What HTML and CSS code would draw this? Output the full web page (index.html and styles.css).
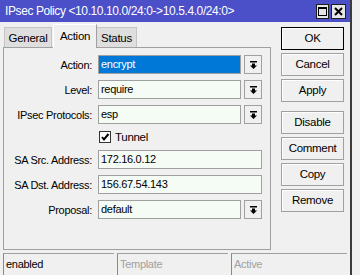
FILE: index.html
```html
<!DOCTYPE html>
<html>
<head>
<meta charset="utf-8">
<link rel="stylesheet" href="styles.css">
</head>
<body>
<div class="window">
  <div class="titlebar">
    <span class="title">IPsec Policy &lt;10.10.10.0/24:0-&gt;10.5.4.0/24:0&gt;</span>
    <div class="tb-buttons">
      <span class="tb-btn max"><svg width="9" height="9" viewBox="0 0 9 9"><rect x="0.5" y="0.5" width="8" height="8" fill="none" stroke="#000"/><rect x="0" y="0" width="9" height="2" fill="#000"/></svg></span>
      <span class="tb-btn close"><svg width="9" height="9" viewBox="0 0 9 9"><path d="M1 1 L8 8 M8 1 L1 8" stroke="#000" stroke-width="2"/></svg></span>
    </div>
  </div>
  <div class="main">
    <div class="left">
      <div class="tabs">
        <div class="tab t-general">General</div>
        <div class="tab active t-action">Action</div>
        <div class="tab t-status">Status</div>
      </div>
      <div class="panel">
        <div class="row">
          <span class="lbl">Action:</span>
          <div class="combo"><div class="field selected">encrypt</div><div class="drop"><svg width="7" height="8" viewBox="0 0 7 8"><rect x="0" y="0" width="7" height="1.5"/><rect x="2" y="2.5" width="3" height="2.5"/><polygon points="0,4.5 7,4.5 3.5,8"/></svg></div></div>
        </div>
        <div class="row">
          <span class="lbl">Level:</span>
          <div class="combo"><div class="field">require</div><div class="drop"><svg width="7" height="8" viewBox="0 0 7 8"><rect x="0" y="0" width="7" height="1.5"/><rect x="2" y="2.5" width="3" height="2.5"/><polygon points="0,4.5 7,4.5 3.5,8"/></svg></div></div>
        </div>
        <div class="row">
          <span class="lbl">IPsec Protocols:</span>
          <div class="combo"><div class="field">esp</div><div class="drop"><svg width="7" height="8" viewBox="0 0 7 8"><rect x="0" y="0" width="7" height="1.5"/><rect x="2" y="2.5" width="3" height="2.5"/><polygon points="0,4.5 7,4.5 3.5,8"/></svg></div></div>
        </div>
        <div class="row check-row">
          <span class="check"><svg width="10" height="10" viewBox="0 0 10 10"><path d="M2 5 L4 7.5 L8.5 2" fill="none" stroke="#000" stroke-width="2"/></svg></span>
          <span class="check-lbl">Tunnel</span>
        </div>
        <div class="row">
          <span class="lbl">SA Src. Address:</span>
          <div class="field wide">172.16.0.12</div>
        </div>
        <div class="row">
          <span class="lbl">SA Dst. Address:</span>
          <div class="field wide">156.67.54.143</div>
        </div>
        <div class="row">
          <span class="lbl">Proposal:</span>
          <div class="combo"><div class="field">default</div><div class="drop"><svg width="7" height="8" viewBox="0 0 7 8"><rect x="0" y="0" width="7" height="1.5"/><rect x="2" y="2.5" width="3" height="2.5"/><polygon points="0,4.5 7,4.5 3.5,8"/></svg></div></div>
        </div>
      </div>
    </div>
    <div class="buttons">
      <div class="btn default">OK</div>
      <div class="btn">Cancel</div>
      <div class="btn">Apply</div>
      <div class="btn sep">Disable</div>
      <div class="btn">Comment</div>
      <div class="btn">Copy</div>
      <div class="btn">Remove</div>
    </div>
  </div>
  <div class="statusbar">
    <div class="sb s1">enabled</div>
    <div class="sb s2 dim">Template</div>
    <div class="sb s3 dim">Active</div>
  </div>
</div>
</body>
</html>
```

FILE: styles.css
```css
html, body {
  margin: 0;
  padding: 0;
}
body {
  background: #f0f0f0;
  font-family: "Liberation Sans", Arial, sans-serif;
  font-size: 11px;
  letter-spacing: -0.3px;
  color: #000;
}
.window {
  width: 350px;
  height: 275px;
  border-right: 2px solid #3c3c3c;
  background: #f0f0f0;
  display: flex;
  flex-direction: column;
  overflow: hidden;
}
.titlebar {
  height: 22px;
  flex: none;
  background: #4b4fc8;
  display: flex;
  align-items: center;
  padding: 0 4px 0 5px;
  color: #fff;
}
.title {
  flex: 1;
  font-size: 12px;
  letter-spacing: -0.4px;
  white-space: nowrap;
}
.tb-buttons {
  display: flex;
  gap: 2px;
}
.tb-btn {
  box-sizing: border-box;
  height: 15px;
  border: 1px solid #1e1e1e;
  background: #e6e6e6;
  display: flex;
  align-items: center;
  justify-content: center;
}
.tb-btn.max { width: 13px; }
.tb-btn.close { width: 15px; }

.main {
  height: 231px;
  flex: none;
  box-sizing: border-box;
  padding-top: 2px;
  display: flex;
}
.left {
  margin-left: 3px;
  width: 268px;
  display: flex;
  flex-direction: column;
}
.tabs {
  height: 23px;
  display: flex;
  align-items: flex-end;
  padding-left: 1px;
  position: relative;
  z-index: 1;
}
.tab {
  box-sizing: border-box;
  height: 20px;
  border: 1px solid #c4c4c4;
  border-bottom: none;
  background: #dedede;
  text-align: center;
  padding-top: 4px;
  font-size: 11.5px;
}
.t-general { width: 48px; margin-right: 1px; }
.t-action { width: 44px; }
.t-status { width: 40px; border-left: none; }
.tab.active {
  height: 24px;
  margin-bottom: -1px;
  background: #f0f0f0;
  border-color: #ffffff #a0a0a0 #a0a0a0 #ffffff;
  padding-top: 5px;
}
.panel {
  box-sizing: border-box;
  height: 203px;
  border: 1px solid #a0a0a0;
  padding-top: 7px;
  display: flex;
  flex-direction: column;
  gap: 6px;
}
.row {
  height: 19px;
  display: flex;
  align-items: center;
}
.lbl {
  width: 88px;
  margin-right: 6px;
  text-align: right;
  white-space: nowrap;
}
.combo {
  display: flex;
  gap: 3px;
}
.field {
  box-sizing: border-box;
  width: 143px;
  height: 19px;
  border: 1px solid #a0a0a0;
  background: #f5fbf5;
  padding-left: 2px;
  line-height: 17px;
  white-space: nowrap;
}
.field.wide { width: 164px; }
.field.selected {
  background: #0078d7;
  color: #fff;
}
.drop {
  box-sizing: border-box;
  width: 18px;
  height: 19px;
  border: 1px solid #a0a0a0;
  background: #f0f0f0;
  display: flex;
  align-items: center;
  justify-content: center;
}
.check-row {
  height: 14px;
  padding-left: 95px;
}
.check {
  box-sizing: border-box;
  width: 12px;
  height: 12px;
  border: 1px solid #333;
  background: #fff;
  display: flex;
  align-items: center;
  justify-content: center;
}
.check-lbl {
  margin-left: 4px;
  font-size: 11.5px;
}
.buttons {
  margin-left: 10px;
  margin-top: 3px;
  width: 63px;
  display: flex;
  flex-direction: column;
  gap: 3px;
}
.btn {
  box-sizing: border-box;
  height: 23px;
  border: 1px solid #a0a0a0;
  background: #f0f0f0;
  box-shadow: inset 1px 1px 0 #ffffff;
  text-align: center;
  line-height: 21px;
  font-size: 11.5px;
}
.btn.default {
  border-color: #000;
}
.btn.sep { margin-top: 6px; }
.statusbar {
  height: 22px;
  flex: none;
  display: flex;
  gap: 3px;
  padding-left: 3px;
}
.sb {
  box-sizing: border-box;
  height: 22px;
  border-top: 1px solid #a0a0a0;
  border-left: 1px solid #8a8a8a;
  padding: 4px 0 0 2px;
  white-space: nowrap;
}
.s1 { width: 111px; }
.s2 { width: 111px; }
.s3 { width: 116px; }
.dim { color: #a0a0a0; }
```
